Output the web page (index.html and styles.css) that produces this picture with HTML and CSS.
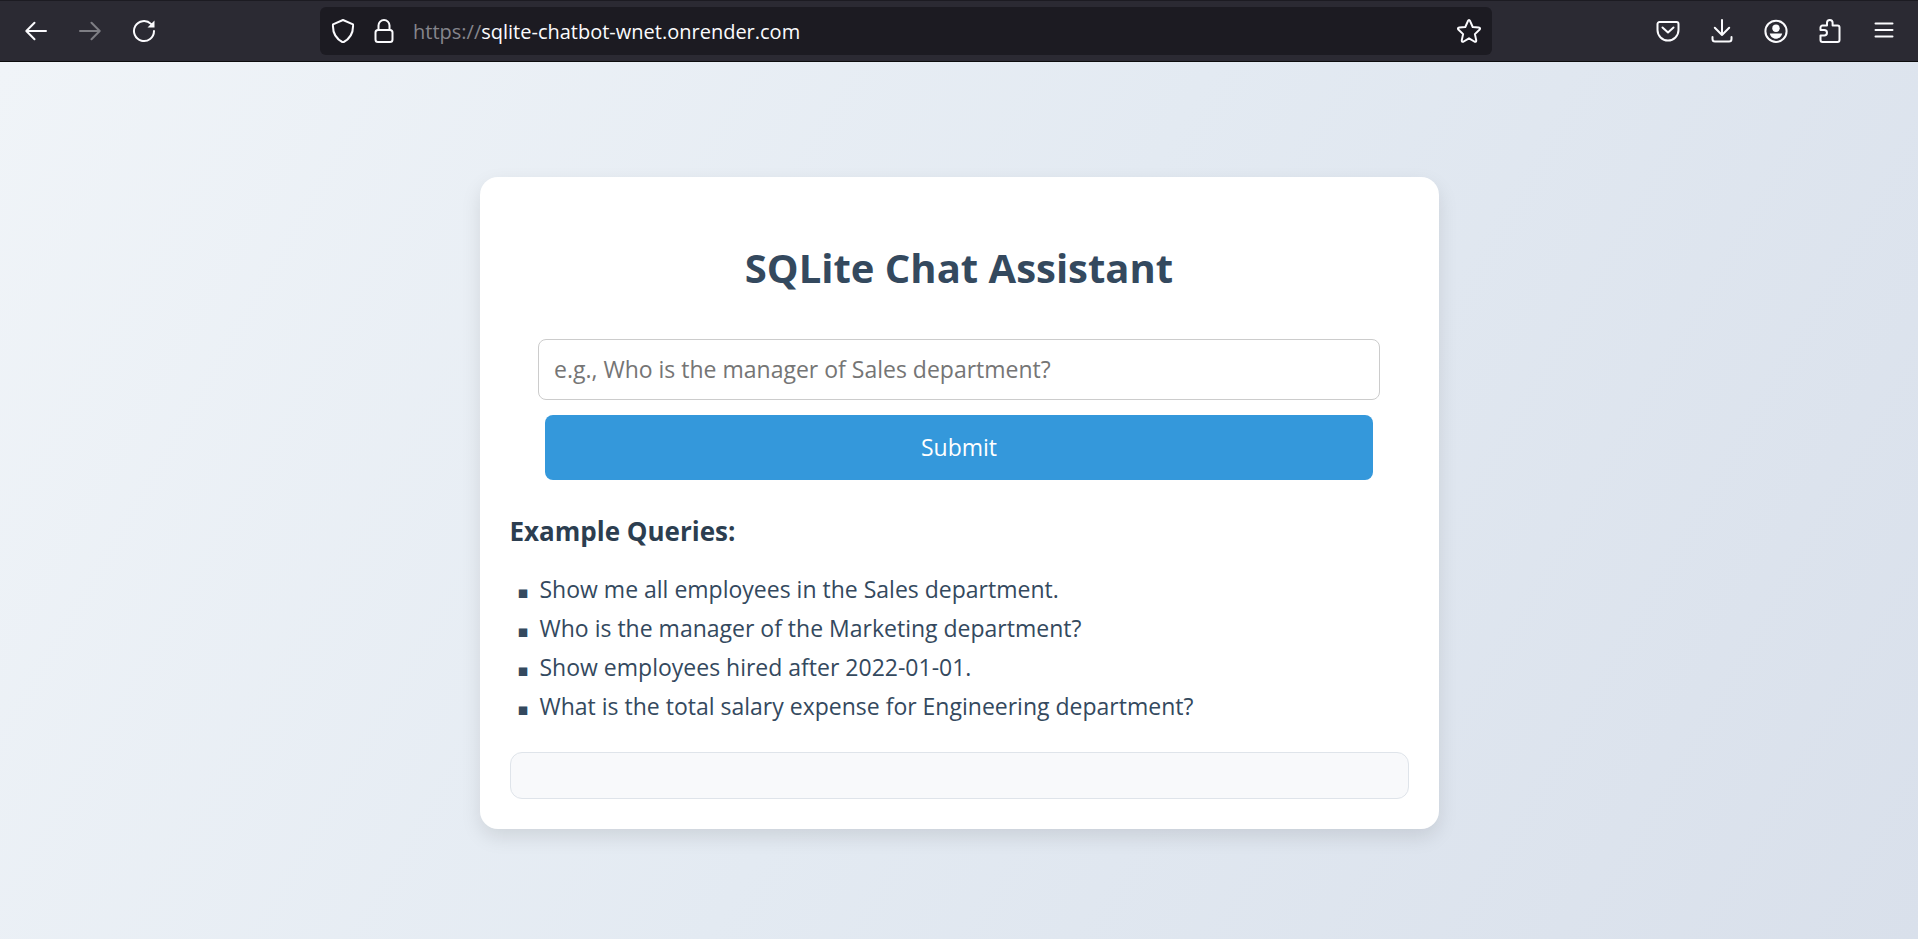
FILE: index.html
```html
<!DOCTYPE html>
<html lang="en">
<head>
<meta charset="utf-8">
<meta name="viewport" content="width=device-width, initial-scale=1">
<title>SQLite Chat Assistant</title>
<link rel="stylesheet" href="styles.css">
</head>
<body>
<header class="toolbar">
  <nav class="nav-buttons" aria-label="Navigation">
    <button class="icon-button" type="button" aria-label="Back"><svg viewBox="0 0 24 24"><path d="M22 12H2.500M10.500 3.800L2.300 12l8.200 8.200"/></svg></button>
    <button class="icon-button" type="button" aria-label="Forward" disabled><svg viewBox="0 0 24 24"><path d="M2 12h19.500M13.500 3.800l8.200 8.200-8.200 8.200"/></svg></button>
    <button class="icon-button" type="button" aria-label="Reload"><svg viewBox="0 0 24 24"><path d="M22 12a10 10 0 1 1-3-7.100l1.500 1.600"/><path class="solid" d="M22.500 1.500v7h-7z"/></svg></button>
  </nav>
  <div class="address">
    <button class="icon-button" type="button" aria-label="Tracking protection"><svg viewBox="0 0 24 24"><path d="M12 1l10 4.300c.6 8.500-2.500 14.200-10 18.200C4.500 19.500 1.400 13.800 2 5.300z"/></svg></button>
    <button class="icon-button" type="button" aria-label="Site information"><svg viewBox="0 0 24 24"><rect x="3.500" y="11" width="17" height="12" rx="2.500"/><path d="M6.500 11V6.500a5.500 5.500 0 0 1 11 0V11"/></svg></button>
    <a class="url" href="https://sqlite-chatbot-wnet.onrender.com"><span class="scheme">https://</span>sqlite-chatbot-wnet.onrender.com</a>
    <button class="icon-button" type="button" aria-label="Bookmark"><svg viewBox="0 0 24 24"><path d="M10.800 2.300q1.200-2.400 2.400 0L15.700 8l6 .6q2.300.5.700 2.200l-4.500 4.300 1.300 6q.2 2.300-1.900 1.400L12 19.300l-5.300 3.200q-2.100.9-1.900-1.400l1.300-6-4.500-4.300Q0 9.100 2.300 8.600l6-.6z"/></svg></button>
  </div>
  <div class="tools">
    <button class="icon-button" type="button" aria-label="Pocket"><svg viewBox="0 0 24 24"><path d="M3.500 3h17a2 2 0 0 1 2 2v6a10.500 10.500 0 0 1-21 0V5a2 2 0 0 1 2-2zM6.500 8.500l5.500 5 5.500-5"/></svg></button>
    <button class="icon-button" type="button" aria-label="Downloads"><svg viewBox="0 0 24 24"><path d="M12 1v15M4.800 8.800l7.200 7.200 7.200-7.200M2.500 18v2a2.500 2.500 0 0 0 2.500 2.500h14a2.500 2.500 0 0 0 2.500-2.500v-2"/></svg></button>
    <button class="icon-button" type="button" aria-label="Account"><svg viewBox="0 0 24 24"><circle cx="12" cy="12.300" r="10.600"/><circle class="solid" cx="12" cy="9.200" r="3.700"/><path class="solid" d="M5.800 14.500h12.400c-.5 2.800-3 5.300-6.200 5.300s-5.700-2.500-6.200-5.300z"/></svg></button>
    <button class="icon-button" type="button" aria-label="Extensions"><svg viewBox="0 0 24 24"><path d="M2.500 11V8.500a2 2 0 0 1 2-2h4.500V3.800a2.800 2.800 0 0 1 5.600 0v2.700h4.900a2 2 0 0 1 2 2V21a2 2 0 0 1-2 2h-15a2 2 0 0 1-2-2v-4.500h3.700a2.700 2.700 0 0 0 0-5.500z"/></svg></button>
    <button class="icon-button" type="button" aria-label="Menu"><svg viewBox="0 0 24 24"><path d="M3.500 4.500h17M3.500 11h17M3.500 17.500h17"/></svg></button>
  </div>
</header>
<main class="page">
  <section class="card">
    <h1 class="title">SQLite Chat Assistant</h1>
    <form class="query-form" onsubmit="return false">
      <input class="query-input" type="text" aria-label="Question" placeholder="e.g., Who is the manager of Sales department?">
      <button class="submit" type="submit">Submit</button>
    </form>
    <h2 class="subtitle">Example Queries:</h2>
    <ul class="examples">
      <li>Show me all employees in the Sales department.</li>
      <li>Who is the manager of the Marketing department?</li>
      <li>Show employees hired after 2022-01-01.</li>
      <li>What is the total salary expense for Engineering department?</li>
    </ul>
    <output class="response"></output>
  </section>
</main>
</body>
</html>
```
FILE: styles.css
```css
* { box-sizing: border-box; }
body {
  margin: 0;
  min-height: 100vh;
  display: flex;
  flex-direction: column;
  font-family: "Segoe UI", "Open Sans", "Noto Sans", sans-serif;
  color: #34495e;
}
.toolbar {
  height: 62px;
  display: flex;
  align-items: center;
  padding: 0 22px;
  background: #2b2a33;
  border-top: 1px solid #1c1b22;
  border-bottom: 1px solid #0c0c0d;
  color: #fbfbfe;
}
.nav-buttons { display: flex; gap: 30px; width: 298px; padding-left: 2px; }
.address {
  flex: 1;
  height: 48px;
  display: flex;
  align-items: center;
  gap: 17px;
  padding: 0 11px;
  border-radius: 6px;
  background: #1c1b22;
}
.tools { display: flex; justify-content: flex-end; gap: 30px; width: 404px; }
.icon-button {
  display: flex;
  flex: none;
  padding: 0;
  border: 0;
  background: none;
  color: inherit;
}
.icon-button:disabled { opacity: 0.4; }
.icon-button svg {
  width: 24px;
  height: 24px;
  fill: none;
  stroke: currentColor;
  stroke-width: 2;
  stroke-linecap: round;
  stroke-linejoin: round;
}
.icon-button .solid { fill: currentColor; stroke: none; }
.url {
  flex: 1;
  color: inherit;
  font-size: 20px;
  text-decoration: none;
  white-space: nowrap;
}
.scheme { color: #85858c; }
.page {
  flex: 1;
  display: flex;
  align-items: center;
  justify-content: center;
  background: linear-gradient(120deg, #f0f4f8, #e3eaf2 50%, #d9e0eb);
}
.card {
  width: 50%;
  margin-top: 4px;
  padding: 30px;
  border-radius: 18px;
  background: #fff;
  box-shadow: 0 8px 20px rgba(0, 0, 0, 0.1);
}
.title {
  margin: 30px 0 40px;
  font-size: 40px;
  line-height: 62px;
  text-align: center;
}
.query-form { display: flex; flex-direction: column; align-items: center; gap: 15px; }
.query-input {
  width: 842px;
  max-width: 100%;
  height: 61px;
  padding: 0 15px;
  border: 1px solid #ccc;
  border-radius: 8px;
  font: inherit;
  font-size: 23px;
}
.query-input::placeholder { color: #757575; }
.submit {
  width: 92%;
  height: 65px;
  border: 0;
  border-radius: 8px;
  background: #3498db;
  color: #fff;
  font: inherit;
  font-size: 23px;
}
.subtitle {
  margin: 31px 0 19px;
  color: #2c3e50;
  font-size: 26px;
  line-height: 40px;
}
.examples {
  margin: 0 0 26px;
  padding-left: 30px;
  list-style-type: "▪\a0\a0";
  font-size: 23px;
  line-height: 39px;
}
.examples li::marker { font-family: "DejaVu Sans", sans-serif; font-size: 17px; }
.response {
  display: block;
  min-height: 47px;
  border: 1px solid #dfe4ea;
  border-radius: 12px;
  background: #f8f9fb;
}
```
